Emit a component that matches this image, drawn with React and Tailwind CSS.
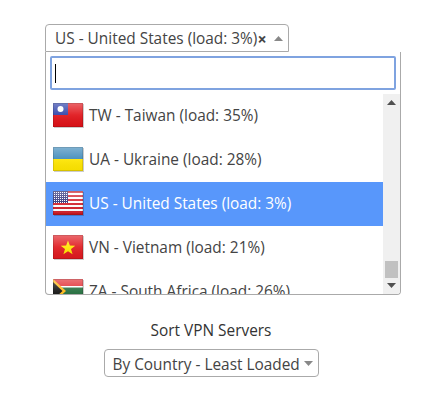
const FONT = "font-['Open_Sans','Noto_Sans',sans-serif]";

function Gloss({ w = 30, h = 24 }) {
  return (
    <>
      <defs>
        <linearGradient id="gloss" x1="0" y1="0" x2="0" y2="1">
          <stop offset="0" stopColor="#fff" stopOpacity="0.35" />
          <stop offset="0.5" stopColor="#fff" stopOpacity="0.08" />
          <stop offset="1" stopColor="#000" stopOpacity="0.04" />
        </linearGradient>
      </defs>
      <rect x="0" y="0" width={w} height={h} fill="url(#gloss)" />
      <rect x="0.5" y="0.5" width={w - 1} height={h - 1} fill="none" stroke="#000" strokeOpacity="0.12" />
    </>
  );
}

function Flag({ code }) {
  return (
    <svg width="32" height="26" viewBox="0 0 32 26" className="shrink-0">
      <rect x="1" y="1" width="30" height="24" fill="#000" fillOpacity="0.2" />
      <svg x="0" y="0" width="30" height="24" viewBox="0 0 30 24">
        {code === "TW" && (
          <>
            <rect width="30" height="24" fill="#e01218" />
            <rect width="15" height="12" fill="#2c3fa8" />
            <circle cx="7.5" cy="6" r="3" fill="#fff" />
          </>
        )}
        {code === "UA" && (
          <>
            <rect width="30" height="12" fill="#3d89ba" />
            <rect y="12" width="30" height="12" fill="#ffe600" />
          </>
        )}
        {code === "US" && (
          <>
            <rect width="30" height="24" fill="#fff" />
            {[0, 4, 8, 12, 16, 20].map((y) => (
              <rect key={y} y={y} width="30" height="2" fill="#d3212c" />
            ))}
            <rect y="22" width="30" height="2" fill="#c8161f" />
            <rect width="15" height="12" fill="#2a2f78" />
            {[1, 3, 5, 7, 9, 11, 13].map((x) =>
              [1, 3, 5, 7, 9, 11].map((y) => <rect key={x + "-" + y} x={x} y={y} width="1" height="1" fill="#fff" />)
            )}
          </>
        )}
        {code === "VN" && (
          <>
            <rect width="30" height="24" fill="#e01a1f" />
            <polygon points="15,5.5 16.9,10.6 22.3,10.7 18,14 19.6,19.2 15,16.2 10.4,19.2 12,14 7.7,10.7 13.1,10.6" fill="#ffe600" />
          </>
        )}
        {code === "ZA" && (
          <>
            <rect width="30" height="8" fill="#e0292f" />
            <rect y="16" width="30" height="8" fill="#1c3f94" />
            <rect y="8" width="30" height="8" fill="#1f6b3a" />
            <rect y="7" width="30" height="1.5" fill="#fff" />
            <rect y="15.5" width="30" height="1.5" fill="#fff" />
            <polygon points="0,0 13,12 0,24" fill="#ffb915" />
            <polygon points="0,3 9.5,12 0,21" fill="#111" />
          </>
        )}
        <Gloss />
      </svg>
    </svg>
  );
}

function Row({ code, label, active }) {
  return (
    <div className={`h-11 shrink-0 flex items-center gap-[4px] pl-[7px] text-[15.4px] ${active ? "bg-[#5897fb] text-white" : "text-[#444]"}`}>
      <Flag code={code} />
      <span>{label}</span>
    </div>
  );
}

function Caret({ up, color = "#888" }) {
  return (
    <svg width="9" height="5" viewBox="0 0 9 5" className="shrink-0">
      <polygon points={up ? "0,5 9,5 4.5,0" : "0,0 9,0 4.5,5"} fill={color} />
    </svg>
  );
}

export default function App() {
  return (
    <div className={`w-[440px] h-[405px] bg-white pt-6 pl-[45px] ${FONT}`}>
      <div className="w-[244px] h-[28px] flex items-center border border-[#aaa] rounded-t-[4px] pl-[9px] text-[15.4px] text-[#444] whitespace-nowrap">
        <span className="pt-[2px]">US - United States (load: 3%)</span>
        <span className="text-[16px] font-bold leading-none text-[#444] pt-[2px]">×</span>
        <span className="ml-[7px]"><Caret up /></span>
      </div>

      <div className="w-[356px] h-[243px] border border-t-0 border-[#aaa] rounded-b-[4px] flex flex-col overflow-hidden">
        <div className="px-1 pt-1 shrink-0">
          <div className="h-[34px] border-2 border-[#7fa3e0] rounded-[2px] flex items-center pl-[3px]">
            <div className="w-px h-[19px] bg-black" />
          </div>
        </div>
        <div className="flex flex-1 mt-1 min-h-0">
          <div className="flex-1 flex flex-col overflow-hidden">
            <Row code="TW" label="TW - Taiwan (load: 35%)" />
            <Row code="UA" label="UA - Ukraine (load: 28%)" />
            <Row code="US" label="US - United States (load: 3%)" active />
            <Row code="VN" label="VN - Vietnam (load: 21%)" />
            <Row code="ZA" label="ZA - South Africa (load: 26%)" />
          </div>
          <div className="w-[17px] bg-[#f0f0f0] flex flex-col items-center justify-between py-[6px]">
            <Caret up color="#505050" />
            <div className="flex flex-col items-center gap-[5px]">
              <div className="w-[13px] h-[17px] bg-[#c1c1c1]" />
              <Caret color="#505050" />
            </div>
          </div>
        </div>
      </div>

      <div className="w-[332px] flex flex-col items-center pt-[26px]">
        <div className="text-[15.4px] leading-5 text-[#333]">Sort VPN Servers</div>
        <div className="mt-[8px] w-[215px] h-7 border border-[#aaa] rounded-[4px] flex items-center pl-2 text-[15.4px] text-[#444] whitespace-nowrap">
          <span className="pt-[3px]">By Country - Least Loaded</span>
          <span className="ml-[4px]"><Caret /></span>
        </div>
      </div>
    </div>
  );
}
